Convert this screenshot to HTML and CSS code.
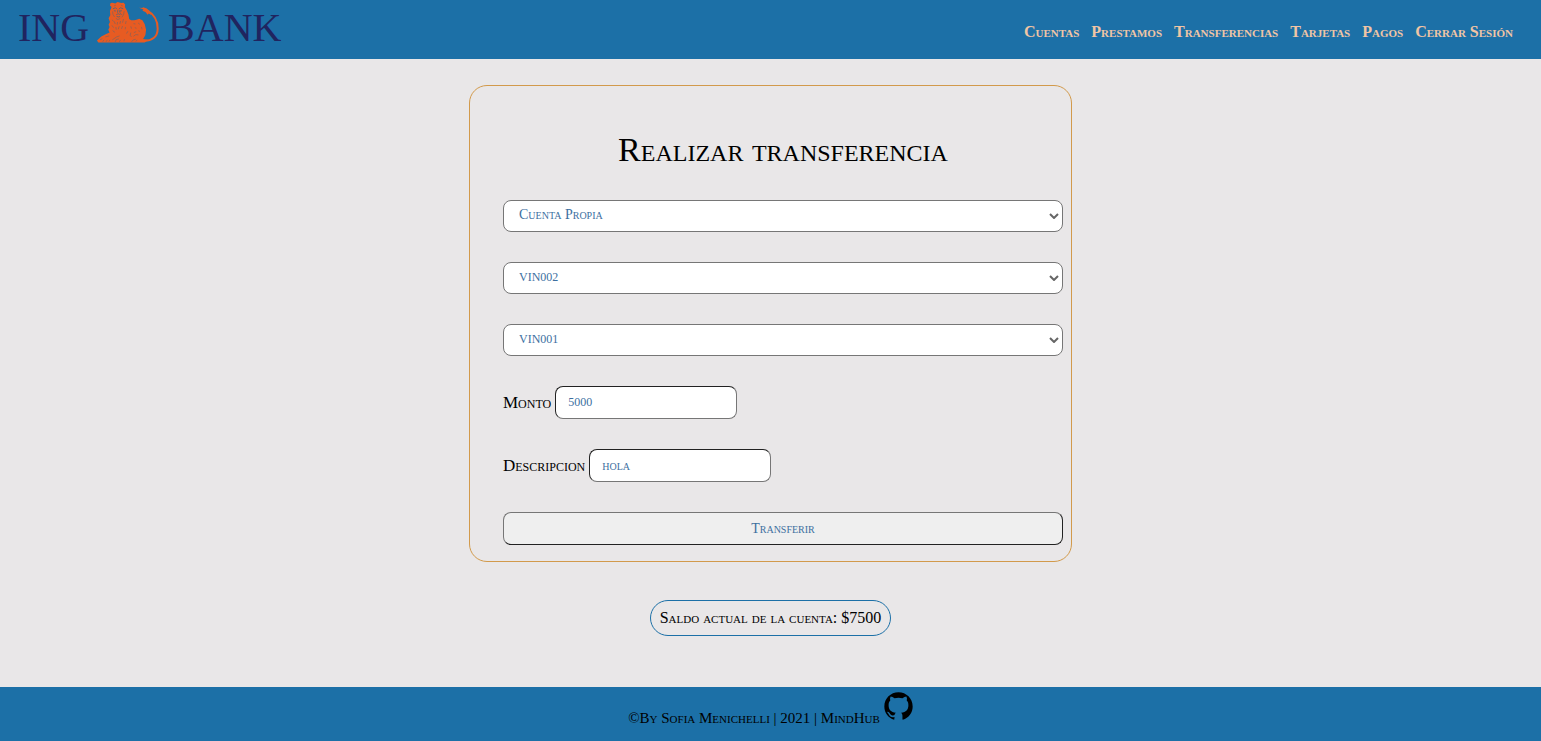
FILE: index.html
```html
<!DOCTYPE html>
<html lang="es">
<head>
<meta charset="utf-8">
<meta name="viewport" content="width=device-width, initial-scale=1">
<title>ING Bank - Transferencias</title>
<link rel="stylesheet" href="styles.css">
</head>
<body>
<header class="header">
  <a class="logo" href="#" aria-label="ING Bank">
    <span>ING</span>
    <svg class="lion" viewBox="36 5 190 123" aria-hidden="true">
      <path class="tail" d="M172 121C202 124 219 109 219 85C219 58 204 40 188 31"/>
      <path class="fur" d="M163 22l12 1-2-3 13 4 9 8 5 12-8-5-3 4-7-8-9-4 3-4z"/>
      <path class="fur" d="M80 20L75 15L77 8L83 7L91 9L98 5L109 8L116 7L121 12L120 20L126 30L131 43L133 56L139 60L148 60L155 58L163 55L173 60L180 72L184 88L182 104L175 116L190 119L180 127H40L36 121L49 109L62 102L74 97L70 88L74 80L71 73L75 65L71 54L76 45L75 32Z"/>
      <path class="face" d="M84 25l8-3 4 4M102 26l5-4 8 3M87 31l6 1M105 32l6-1M99 28l-1 9M104 30l1 7M94 43l6-3 4 2 4-2 3 3M95 48l6 2 5-2"/>
      <path class="shade" d="M87 17l6-3M108 14l6 3M83 33l1 9 5 8M118 32l-2 11-5 8M93 54l6 4 7-4M81 58l5 5M88 63l3 8M98 65l-1 8M107 62l-2 9M116 56l-3 11M124 62l-2 9M81 75l5 7M93 80l1 8M103 78l-3 9M113 77l-3 9M122 80l-1 7M83 91l7 5M45 119l7-4M53 125l4-6M63 125l4-6M72 124l3-5M61 110l12-3M82 119l13-9 9-3M91 125l3-7 8-2M103 125l4-6M117 123l2-6M125 100l4-7M138 97l-2 8 4 5M140 85l-2-7M146 70l6 1M160 68l5 4M170 80l2 7M150 82l5 2M162 90l2 5M147 97l7-3M146 108l7-5 8 1M140 125l5-6 8-2M153 124l4-5"/>
    </svg>
    <span>BANK</span>
  </a>
  <nav class="nav">
    <a href="#">Cuentas</a>
    <a href="#">Prestamos</a>
    <a href="#">Transferencias</a>
    <a href="#">Tarjetas</a>
    <a href="#">Pagos</a>
    <a href="#">Cerrar Sesión</a>
  </nav>
</header>
<main class="main">
  <form class="card">
    <h1 class="title">Realizar transferencia</h1>
    <select class="field select" aria-label="Tipo de cuenta"><option>Cuenta Propia</option></select>
    <select class="field select code" aria-label="Cuenta de origen"><option>VIN002</option></select>
    <select class="field select code" aria-label="Cuenta de destino"><option>VIN001</option></select>
    <div class="row"><label for="monto">Monto</label><input class="field input code" id="monto" type="text" value="5000"></div>
    <div class="row"><label for="descripcion">Descripcion</label><input class="field input" id="descripcion" type="text" value="hola"></div>
    <button class="field submit" type="button">Transferir</button>
  </form>
  <p class="balance">Saldo actual de la cuenta: $7500</p>
</main>
<footer class="footer">
  <p class="credit">©By Sofia Menichelli | 2021 | MindHub</p>
  <a class="github" href="#" aria-label="GitHub">
    <svg viewBox="19 18 88 88" aria-hidden="true"><path d="M50 102C32 97 20 81 20 62C20 38 39 19 63 19S106 38 106 62C106 81 94 97 76 102L75 101V90Q75 84 71 81C86 79 93 72 93 58C93 52 92 48 88 44Q90 38 87 32Q81 32 75 37Q63 34 51 37Q45 32 39 32Q36 38 38 44C34 48 33 52 33 58C33 72 40 79 55 81Q51 84 51 88C43 91 39 87 36 82Q33 78 29 78Q28 80 32 83C36 91 40 97 51 94Z"/></svg>
  </a>
</footer>
</body>
</html>
```
FILE: styles.css
```css
* {
  box-sizing: border-box;
}

body {
  margin: 0;
  min-height: 100vh;
  display: flex;
  flex-direction: column;
  background: #e9e7e8;
  color: #000;
  font-family: "Liberation Serif", serif;
  font-size: 16px;
  line-height: 20px;
  font-variant-caps: small-caps;
}

.header {
  display: flex;
  flex-wrap: wrap;
  justify-content: space-between;
  align-items: flex-start;
  min-height: 59px;
  padding: 0 28px 0 18px;
  background: #1c70a7;
}

.logo {
  display: flex;
  align-items: flex-end;
  gap: 8px;
  padding-top: 2px;
  color: #20245f;
  font-size: 40px;
  line-height: 30px;
  text-decoration: none;
}

.lion {
  width: 63px;
  height: 41px;
}

.fur {
  fill: #e75b22;
}

.tail {
  fill: none;
  stroke: #e75b22;
  stroke-width: 6;
}

.face {
  fill: none;
  stroke: #2c6690;
  stroke-width: 2;
}

.shade {
  fill: none;
  stroke: #7a6260;
  stroke-width: 2;
}

.nav {
  display: flex;
  flex-wrap: wrap;
  gap: 12px;
  padding-top: 22px;
  font-weight: bold;
}

.nav a {
  color: #f0c5a5;
  text-decoration: none;
}

.main {
  flex: 1;
  display: flex;
  flex-direction: column;
  align-items: center;
  padding: 26px 16px;
}

.card {
  display: flex;
  flex-direction: column;
  gap: 30px;
  width: 100%;
  max-width: 603px;
  padding: 44px 8px 16px 33px;
  border: 1px solid #d29a4b;
  border-radius: 18px;
}

.title {
  margin: 0;
  font-size: 34px;
  font-weight: normal;
  line-height: 40px;
  text-align: center;
}

.field {
  height: 33px;
  border: 1px solid #767676;
  border-radius: 8px;
  background-color: #fff;
  color: #3d6f9f;
  font: inherit;
  font-size: 14px;
}

.select {
  appearance: none;
  height: 32px;
  padding: 0 28px 2px 15px;
  background-image: url("data:image/svg+xml,%3Csvg xmlns='http://www.w3.org/2000/svg' width='10' height='6'%3E%3Cpath d='M1 1l4 4 4-4' fill='none' stroke='%23666' stroke-width='2'/%3E%3C/svg%3E");
  background-repeat: no-repeat;
  background-position: right 3px center;
}

.code {
  font-size: 12px;
}

.row {
  display: flex;
  align-items: center;
  gap: 4px;
  font-size: 17px;
}

.input {
  width: 182px;
  padding: 0 12px;
  border-color: #222 #767676 #767676 #222;
}

.submit {
  border-color: #767676 #222 #222 #767676;
  background-color: #efefef;
}

.balance {
  margin: 38px 0 0;
  padding: 7px 9px;
  border: 1px solid #1c70a7;
  border-radius: 18px;
}

.footer {
  display: flex;
  justify-content: center;
  gap: 4px;
  min-height: 54px;
  background: #1c70a7;
}

.credit {
  margin: 0;
  padding-top: 21px;
  font-size: 15px;
}

.github {
  padding-top: 5px;
}

.github svg {
  display: block;
  width: 29px;
  height: 29px;
}
```
